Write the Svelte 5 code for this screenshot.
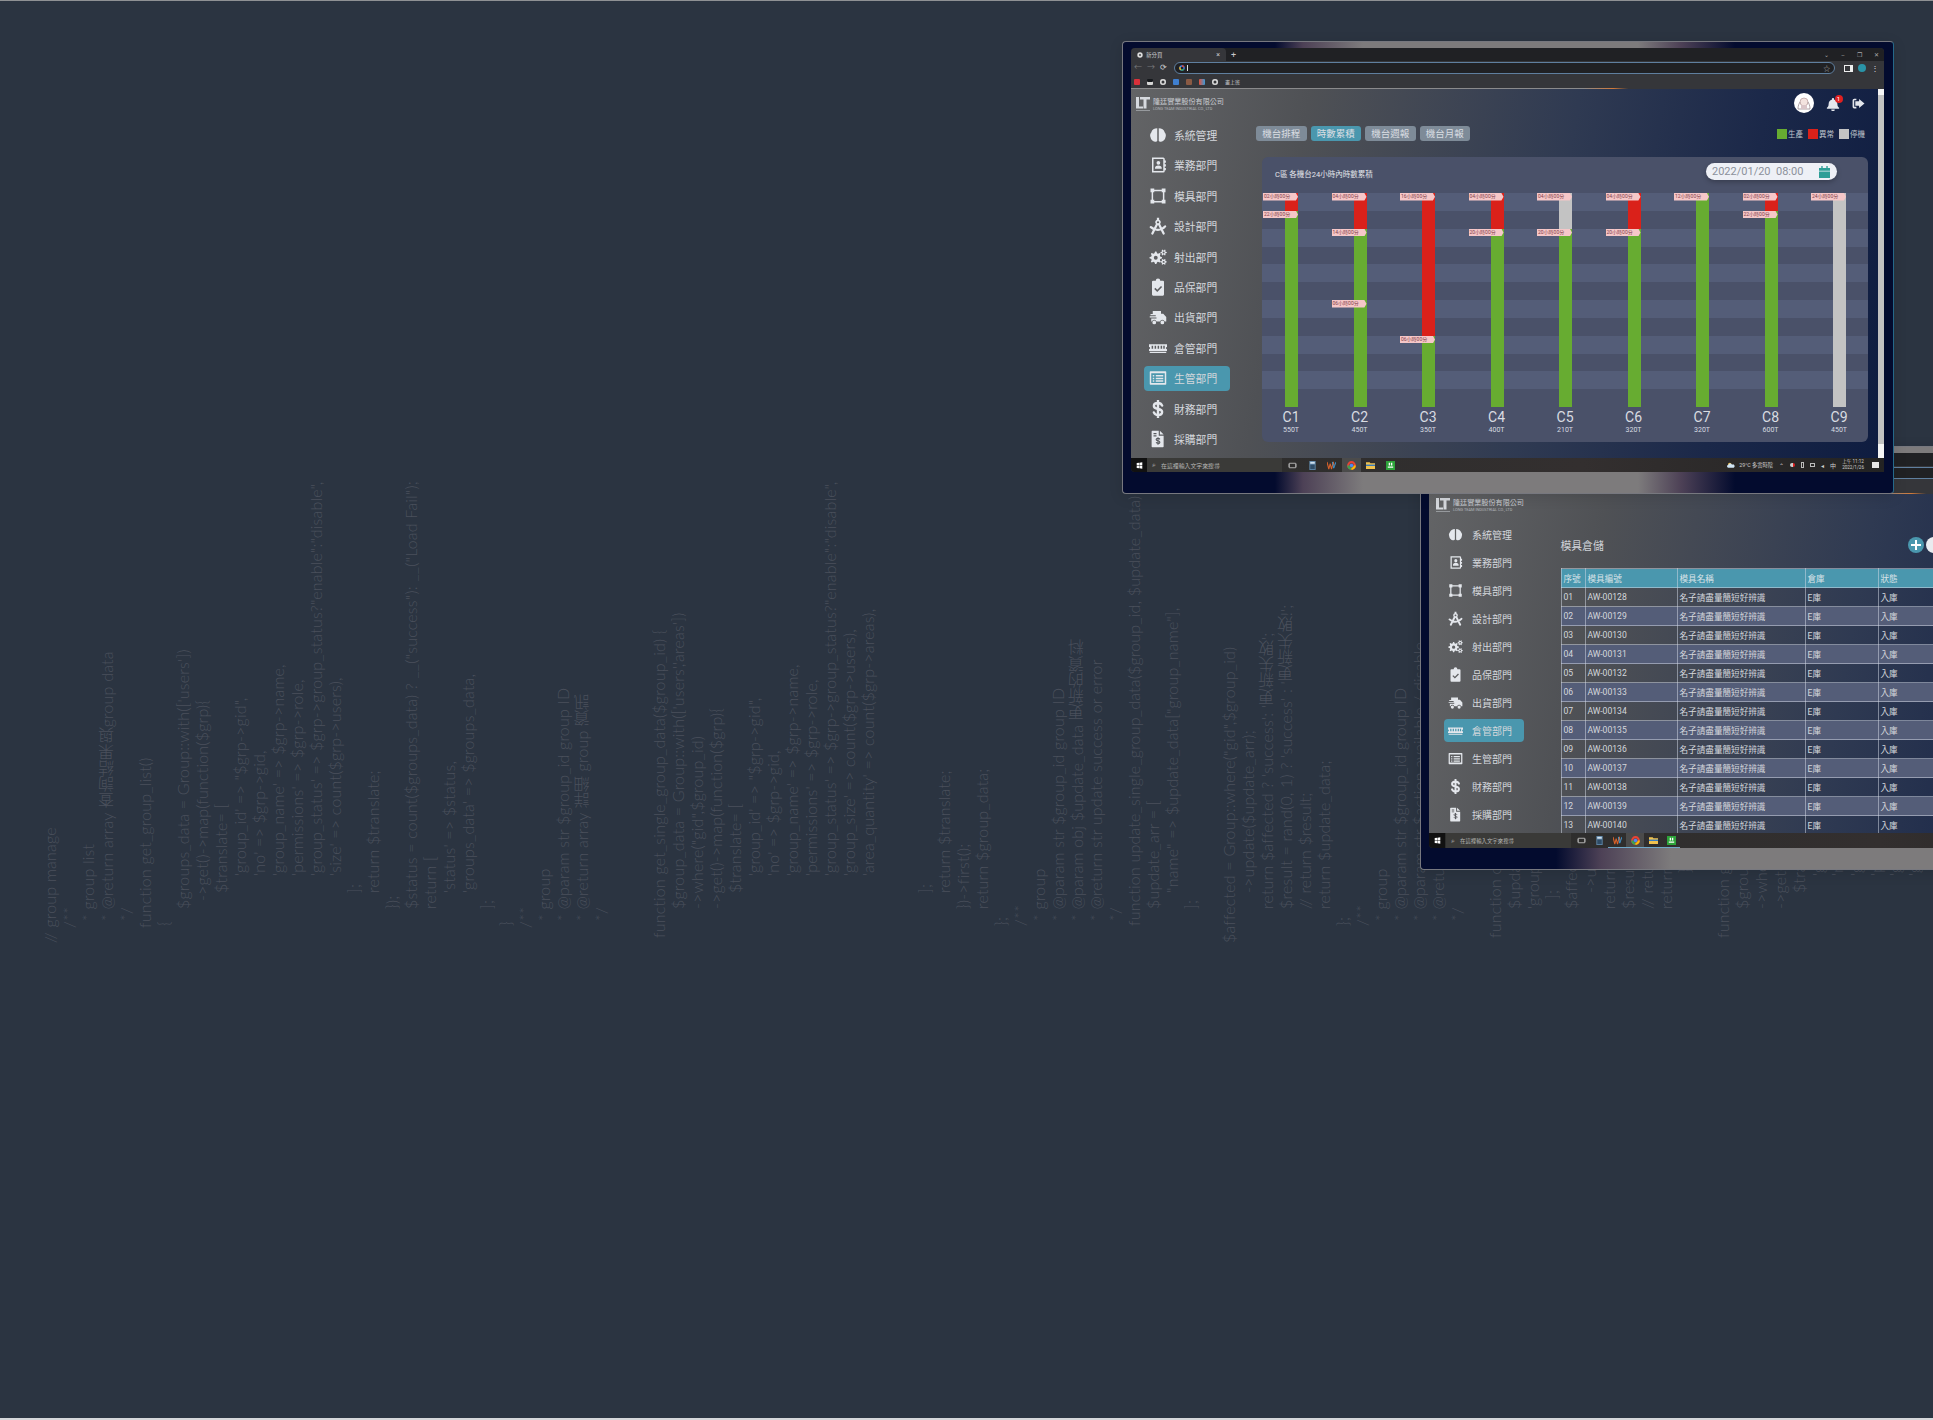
<script>
  // gear outline with a hole, used by the injection dept icon
  function gear(cx, cy, r1, r2, hole, teeth) {
    let d = '';
    const n = teeth * 4;
    for (let i = 0; i < n; i++) {
      const r = i % 4 < 2 ? r2 : r1;
      const a = ((i - 0.5) / n) * Math.PI * 2;
      d += (i ? 'L' : 'M') + (cx + r * Math.cos(a)).toFixed(2) + ' ' + (cy + r * Math.sin(a)).toFixed(2);
    }
    d += `zM${cx + hole} ${cy}a${hole} ${hole} 0 1 0 ${-2 * hole} 0a${hole} ${hole} 0 1 0 ${2 * hole} 0z`;
    return d;
  }

  const icons = {
    brain: { f: 'M11 3C7 3 4 5 3 8.500 1.500 10.500 1 12 2 15c.5 3 3 6 6 6 1.500 0 3-.5 3-1.500zM13 3c4 0 7 2 8 5.500 1.500 2 2 3.500 1 6.500-.5 3-3 6-6 6-1.500 0-3-.5-3-1.500z' },
    contact: { f: 'M4 2h15a2 2 0 0 1 2 2v16a2 2 0 0 1-2 2H4zM6 4v16h13V4zM21 6h1.500v3H21zM21 11h1.500v3H21zM21 16h1.500v3H21zM12.500 6.500a2.500 2.500 0 1 1 0 5 2.500 2.500 0 0 1 0-5zM8 16c0-2 1.500-3.500 4.500-3.500S17 14 17 16v1H8z' },
    vector: { f: 'M2 2h5v5H2zM17 2h5v5h-5zM2 17h5v5H2zM17 17h5v5h-5zM7 3.500h10v2H7zM7 18.500h10v2H7zM3.500 7h2v10h-2zM18.500 7h2v10h-2z' },
    compass: { f: 'M10.500 1h3v2.500a3.700 3.700 0 1 1-3 0zM12 5.500a1.500 1.500 0 1 0 0 3 1.500 1.500 0 0 0 0-3z', s: 'M10.500 10L4.500 22M13.500 10l6 12M2.500 13.500c5 5 14 5 19-1', w: 3 },
    cogs: { f: gear(9, 13, 6.2, 8.4, 2.600, 8) + gear(19.500, 6, 2.800, 4.200, 1.300, 6) + gear(19.500, 18.500, 2.800, 4.200, 1.300, 6) },
    clipboard: { f: 'M5.500 3.500H9a3 3 0 0 1 6 0h3.500A1.500 1.500 0 0 1 20 5v17a1.500 1.500 0 0 1-1.500 1.500h-13A1.500 1.500 0 0 1 4 22V5a1.500 1.500 0 0 1 1.500-1.500zM7 14.500L8.500 13l2.500 2.500 5-5 1.500 1.500-6.500 6.500z' },
    truck: { f: 'M5 4h11v3.500h3l4 4.500v6h-2.200a3.200 3.200 0 0 0-6.100 0H10a3.200 3.200 0 0 0-6.100 0H3v-4h7v-1.500H1V11h8V9.500H2V8h3zM7 16.800a2.500 2.500 0 1 1 0 5 2.500 2.500 0 0 1 0-5zM17.800 16.800a2.500 2.500 0 1 1 0 5 2.500 2.500 0 0 1 0-5z' },
    memory: { f: 'M0 7h24v3.500a1.500 1.500 0 0 0 0 3V16H0v-2.500a1.500 1.500 0 0 0 0-3zM3.500 9v4h2V9zM7.500 9v4h2V9zM11.500 9v4h2V9zM15.500 9v4h2V9zM19 9v4h2V9zM1 17h22v1.600H1z' },
    list: { f: 'M2 3h20a1 1 0 0 1 1 1v16a1 1 0 0 1-1 1H2a1 1 0 0 1-1-1V4a1 1 0 0 1 1-1zM3 5.500v13h18v-13zM5 8h2v2H5zM9 8h10v2H9zM5 11.500h2v2H5zM9 11.500h10v2H9zM5 15h2v2H5zM9 15h10v2H9z' },
    dollar: { s: 'M17.500 7.500C16.500 5 14.500 4 12 4 8.500 4 6.500 5.700 6.500 8s2 3.400 5.500 4 5.500 1.700 5.500 4-2 4-5.500 4c-2.500 0-4.500-1-5.500-3.500M12 1v22', w: 3.200 },
    invoice: { f: 'M4.500 1H13v6.500h6.500V22a1 1 0 0 1-1 1h-14a1 1 0 0 1-1-1V2a1 1 0 0 1 1-1zM14.500 1l5 5h-5zM6 4v1.500h4V4zM6 7v1.500h4V7z', d: 'M14.500 12.500c-.5-1-1.500-1.500-2.500-1.500-1.500 0-2.500.7-2.500 1.700s1 1.400 2.500 1.700 2.500.8 2.500 1.800-1 1.700-2.500 1.700c-1 0-2-.5-2.500-1.500M12 9.500v10' }
  };

  const depts = [
    ['brain', '系統管理'], ['contact', '業務部門'], ['vector', '模具部門'], ['compass', '設計部門'],
    ['cogs', '射出部門'], ['clipboard', '品保部門'], ['truck', '出貨部門'], ['memory', '倉管部門'],
    ['list', '生管部門'], ['dollar', '財務部門'], ['invoice', '採購部門']
  ];

  const hour = 214 / 24;
  const machines = [
    { name: 'C1', ton: '550T', segs: [['red', 2], ['green', 22]], tags: [[0, '02'], [2, '22']] },
    { name: 'C2', ton: '450T', segs: [['red', 4], ['green', 20]], tags: [[0, '04'], [4, '14'], [12, '06']] },
    { name: 'C3', ton: '350T', segs: [['red', 16], ['green', 8]], tags: [[0, '16'], [16, '06']] },
    { name: 'C4', ton: '400T', segs: [['red', 4], ['green', 20]], tags: [[0, '04'], [4, '20']] },
    { name: 'C5', ton: '210T', segs: [['grey', 4], ['green', 20]], tags: [[0, '04'], [4, '20']] },
    { name: 'C6', ton: '320T', segs: [['red', 4], ['green', 20]], tags: [[0, '04'], [4, '20']] },
    { name: 'C7', ton: '320T', segs: [['green', 24]], tags: [[0, '12']] },
    { name: 'C8', ton: '600T', segs: [['red', 2], ['green', 22]], tags: [[0, '02'], [2, '22']] },
    { name: 'C9', ton: '450T', segs: [['grey', 24]], tags: [[0, '24']] }
  ];

  const rows = Array.from({ length: 13 }, (_, i) => ({
    no: String(i + 1).padStart(2, '0'),
    code: 'AW-00' + (128 + i)
  }));

  const code = [
    [0, '// group manage'], [15, '/**'], [22, '* group list'], [22, '* @return array 查詢結果與group data'], [22, '*/'],
    [15, 'function get_group_list()'], [17, '{'], [34, "$groups_data = Group::with(['users'])"],
    [42, '->get()->map(function($grp){'], [50, '$translate= ['], [67, `'group_id' => "$grp->gid",`], [67, "'no' => $grp->gid,"],
    [67, "'group_name' => $grp->name,"], [67, "'permissions' => $grp->role,"],
    [67, `'group_status' => $grp->group_status?"enable":"disable",`], [67, "'size' => count($grp->users),"],
    [50, '];'], [50, 'return $translate;'], [34, '});'], [34, '$status = count($groups_data) ? __("success"): __("Load Fail");'],
    [34, 'return ['], [50, "'status' => $status,"], [50, "'groups_data' => $groups_data,"], [34, '];'], [17, '}'],
    [15, '/**'], [22, '* group'], [22, '* @param str $group_id group ID'], [22, '* @return array 詳細 group 資訊'], [22, '*/'], [0, ''], [0, ''],
    [5, 'function get_single_group_data($group_id) {'], [34, `$group_data = Group::with(['users','areas'])`],
    [34, '->where("gid",$group_id)'], [34, '->get()->map(function($grp){'], [50, '$translate= ['], [67, `'group_id' => "$grp->gid",`],
    [67, "'no' => $grp->gid,"], [67, "'group_name' => $grp->name,"], [67, "'permissions' => $grp->role,"],
    [67, `'group_status' => $grp->group_status?"enable":"disable",`], [67, "'group_size' => count($grp->users),"],
    [67, "'area_quantity' => count($grp->areas),"], [0, ''], [0, ''],
    [50, '];'], [50, 'return $translate;'], [34, '})->first();'], [34, 'return $group_data;'], [17, '};'],
    [17, '/**'], [22, '* group'], [22, '* @param str $group_id group ID'], [22, '* @param obj $update_data 更新的資料'],
    [22, '* @return str update success or error'], [22, '*/'],
    [17, 'function update_single_group_data($group_id, $update_data) {'], [34, '$update_arr = ['],
    [50, '"name" => $update_data["group_name"],'], [34, '];'], [0, ''], [0, '$affected = Group::where("gid",$group_id)'],
    [50, '->update($update_arr);'], [34, "return $affected ? 'success': '更新失敗';"], [34, "$result = rand(0, 1) ? 'success' : '更新失敗!';"],
    [34, '// return $result;'], [34, 'return $update_data;'], [17, '};'], [17, '/**'], [22, '* group'],
    [22, '* @param str $group_id group ID'], [22, '* @param str $action available / disable'], [22, '* @return str success'], [22, '*/'], [0, ''],
    [5, 'function change_group_status($group_id, $action) {'], [34, '$update_arr = ['], [34, "'group_status' => $action,"], [44, '];'],
    [34, '$affected = Group::where("gid",$group_id)'], [50, '->update($update_arr);'], [34, "return $affected ? 'success': 'error';"],
    [34, "$result = rand(0, 1);"], [34, '// return $result;'], [34, 'return $update_data;'], [70, '};'], [0, ''],
    [5, 'function get_group_status($group_id) {'], [34, '$group = Group::with(["users"])'], [34, '->where("gid",$group_id)'],
    [34, '->get()->map(function($grp){'], [50, '$translate= ['], [67, `'group_id' => "$grp->gid",`], [67, "'no' => $grp->gid,"],
    [67, "'group_name' => $grp->name,"], [67, "'permissions' => $grp->role,"], [67, "'group_status' => $grp->group_status,"],
    [67, "'group_size' => count($grp->users),"]
  ];
</script>

{#snippet icon(name)}
  <svg class="dept-icon" viewBox="0 0 24 24">
    {#if icons[name].f}<path d={icons[name].f} fill="currentColor" fill-rule="evenodd" />{/if}
    {#if icons[name].s}<path d={icons[name].s} fill="none" stroke="currentColor" stroke-width={icons[name].w || 2.400} stroke-linecap="round" />{/if}
    {#if icons[name].d}<path d={icons[name].d} fill="none" stroke="#55585c" stroke-width="1.500" />{/if}
  </svg>
{/snippet}

{#snippet logo()}
  <div class="brand">
    <svg class="brand-mark" viewBox="0 0 28 32">
      <path d="M0 2h6v19h8v4H0z" fill="#d6d9de" />
      <path d="M8 2h20v5h-7v18h-6V7H8z" fill="#d6d9de" />
      <rect x="0" y="28" width="28" height="1.500" fill="#a9acb1" />
    </svg>
    <div class="brand-text">
      <span class="brand-zh">隆廷實業股份有限公司</span>
      <span class="brand-en">LONG TEAM INDUSTRIAL CO., LTD</span>
    </div>
  </div>
{/snippet}

{#snippet sidebar(active)}
  <nav class="sidebar">
    {#each depts as [name, label]}
      <div class="dept" class:active={label === active}>
        {@render icon(name)}
        <span>{label}</span>
      </div>
    {/each}
  </nav>
{/snippet}

{#snippet browser()}
  <div class="browser">
    <div class="tabstrip">
      <div class="tab">
        <svg class="mini" viewBox="0 0 10 10"><circle cx="5" cy="5" r="4.500" fill="#dcdcdc" /><circle cx="5" cy="5" r="1.500" fill="#35363a" /></svg>
        <span>新分頁</span>
        <i class="tab-x">×</i>
      </div>
      <span class="tab-plus">+</span>
      <div class="win-btns"><span>⌄</span><span>–</span><span>❐</span><span>✕</span></div>
    </div>
    <div class="toolbar">
      <span class="nav-btn dim">←</span><span class="nav-btn dim">→</span><span class="nav-btn">⟳</span>
      <div class="omnibox">
        <svg class="mini" viewBox="0 0 10 10">
          <circle cx="5" cy="5" r="3.500" fill="none" stroke="#4c8bf5" stroke-width="2" />
          <path d="M5 1.500A3.500 3.500 0 0 1 8 3.300" fill="none" stroke="#e94235" stroke-width="2" />
          <path d="M2 3.300A3.500 3.500 0 0 0 3.300 8" fill="none" stroke="#fabb05" stroke-width="2" />
          <path d="M3.300 8A3.500 3.500 0 0 0 7.800 7" fill="none" stroke="#34a853" stroke-width="2" />
        </svg>
        <i class="caret"></i>
        <span class="omni-right">☆</span>
      </div>
      <i class="side-btn"></i>
      <i class="profile"></i>
      <span class="kebab">⋮</span>
    </div>
    <div class="bookmarks">
      <i class="bm" style="background:#d9303a"></i>
      <i class="bm" style="background:#15181c;box-shadow:inset 0 -3px 0 #d5d5d5"></i>
      <i class="bm round"></i>
      <i class="bm" style="background:#3f7fd0"></i>
      <i class="bm" style="background:#8a5a44"></i>
      <i class="bm" style="background:linear-gradient(90deg,#e2523b,#3a9ad9)"></i>
      <i class="bm round"></i>
      <span>畫上班</span>
    </div>
  </div>
{/snippet}

{#snippet taskbar(showTray)}
  <div class="taskbar">
    <div class="start">
      <svg viewBox="0 0 10 10"><path d="M1 1.500l3.500-.5v3.600H1zM5 1l4-.5v4.100H5zM1 5.200h3.500V9L1 8.500zM5 5.200h4v4.300L5 9z" fill="#fff" /></svg>
    </div>
    <div class="search"><span class="lens">⌕</span><span>在這裡輸入文字來搜尋</span></div>
    <div class="tb-icon"><svg viewBox="0 0 10 10"><path d="M1.500 2.500h7v5h-7zM0 3v4M10 3v4" fill="none" stroke="#bbb" /></svg></div>
    <div class="tb-icon"><svg viewBox="0 0 10 10"><rect x="1.500" y="0" width="7" height="10" fill="#5f86a8" /><rect x="2.500" y="1" width="5" height="2" fill="#cfe0ee" /><rect x="2.500" y="4" width="5" height="5" fill="#2f4c66" /></svg></div>
    <div class="tb-icon lined"><svg viewBox="0 0 10 10"><path d="M0 1l2 8 1.500-6 1.500 6 2-8 1 4" fill="none" stroke="#d9622b" stroke-width="1.200" /><path d="M6 1l1.500 7L10 1" fill="none" stroke="#3a9ad9" /></svg></div>
    <div class="tb-icon on lined"><svg viewBox="0 0 10 10"><circle cx="5" cy="5" r="3.700" fill="none" stroke="#e94235" stroke-width="2.400" /><path d="M1.500 5A3.600 3.600 0 0 0 5 8.700" fill="none" stroke="#34a853" stroke-width="2.400" /><path d="M8.600 5A3.600 3.600 0 0 1 5 8.700" fill="none" stroke="#fabb05" stroke-width="2.400" /><circle cx="5" cy="5" r="2" fill="#4c8bf5" /></svg></div>
    <div class="tb-icon lined"><svg viewBox="0 0 10 10"><path d="M0 1.500h4l1 1h5V9H0z" fill="#f0c24f" /><rect x="0" y="4" width="10" height="1.500" fill="#2f78c4" /></svg></div>
    <div class="tb-icon lined"><svg viewBox="0 0 10 10"><rect width="10" height="10" fill="#2da43a" /><path d="M3 2h1.500v3H3zM5.500 2H7v3H5.500zM2 6h6v1.500H2z" fill="#fff" /></svg></div>
    {#if showTray}
      <div class="tray">
        <svg class="cloud" viewBox="0 0 12 8"><circle cx="4" cy="3" r="2.500" fill="#f2c14e" /><path d="M2 8a2 2 0 0 1 0-4 3 3 0 0 1 5.500-.5A2.300 2.300 0 0 1 10 8z" fill="#cfe4f5" /></svg>
        <span class="weather">29°C 多雲時陰</span>
        <span class="tray-sym">⌃</span>
        <i class="tray-dot"></i>
        <i class="tray-box"></i>
        <i class="tray-box small"></i>
        <span class="tray-sym">◂</span>
        <span class="tray-sym ime">中</span>
        <div class="clock"><span>上午 11:12</span><span>2022/1/26</span></div>
        <i class="notify"></i>
      </div>
    {/if}
  </div>
{/snippet}

<div class="desktop">
  <div class="code">
    {#each code as [indent, text]}
      <div class="code-line" style="padding-inline-start:{indent}px">{text}</div>
    {/each}
  </div>

  <!-- 倉管部門 window, sits behind the chart window and runs off the right edge -->
  <section class="window win-stock">
    <div class="screen">
      {@render browser()}
      <div class="app">
        <div class="app-page">
          <header class="app-head">{@render logo()}</header>
          <div class="app-body">
            {@render sidebar('倉管部門')}
            <main class="stock">
              <div class="stock-title">
                <h2>模具倉儲</h2>
                <span class="round-btn plus"><i></i></span>
                <span class="round-btn"></span>
              </div>
              <table>
                <colgroup><col style="width:24px" /><col style="width:92px" /><col style="width:128px" /><col style="width:73px" /><col style="width:120px" /></colgroup>
                <thead>
                  <tr><th>序號</th><th>模具編號</th><th>模具名稱</th><th>倉庫</th><th>狀態</th></tr>
                </thead>
                <tbody>
                  {#each rows as row}
                    <tr>
                      <td>{row.no}</td><td>{row.code}</td><td>名子請盡量簡短好辨識</td><td>E庫</td><td>入庫</td>
                    </tr>
                  {/each}
                </tbody>
              </table>
            </main>
          </div>
        </div>
      </div>
      {@render taskbar(false)}
    </div>
  </section>

  <!-- 生管部門 window -->
  <section class="window win-chart">
    <div class="screen">
      {@render browser()}
      <div class="app">
        <div class="app-page">
          <header class="app-head">
            {@render logo()}
            <div class="user">
              <div class="avatar">
                <svg viewBox="0 0 20 20">
                  <circle cx="10" cy="9" r="4" fill="#f3e3df" stroke="#a98b8b" stroke-width=".6" />
                  <path d="M6 9c-2 3-2 6-2 7h12c0-1 0-4-2-7" fill="none" stroke="#9a8a8f" stroke-width=".8" />
                  <path d="M7 16V12h6v4z" fill="#d9c5c8" />
                </svg>
              </div>
              <div class="bell">
                <svg viewBox="0 0 24 24"><path d="M12 1.500a2 2 0 0 1 2 2V4.500c3.500 1 5.500 3.600 5.500 7.500 0 4 1.500 5 3 6.500v1.500h-21v-1.500c1.500-1.500 3-2.500 3-6.500 0-3.900 2-6.500 5.500-7.500V3.500a2 2 0 0 1 2-2zM9 21.500h6a3 3 0 0 1-6 0z" fill="#e3e6ec" /></svg>
                <b>1</b>
              </div>
              <svg class="logout" viewBox="0 0 24 24"><path d="M9 3H5a3 3 0 0 0-3 3v12a3 3 0 0 0 3 3h4v-3H5V6h4z" fill="#e3e6ec" /><path d="M14 3.500L24 12 14 20.500V16H7V8h7z" fill="#e3e6ec" /></svg>
            </div>
          </header>
          <div class="app-body">
            {@render sidebar('生管部門')}
            <main class="board">
              <div class="board-bar">
                <div class="tabs">
                  <span class="pill">機台排程</span>
                  <span class="pill current">時數累積</span>
                  <span class="pill">機台週報</span>
                  <span class="pill">機台月報</span>
                </div>
                <div class="legend">
                  <i class="green"></i><span>生產</span>
                  <i class="red"></i><span>異常</span>
                  <i class="grey"></i><span>停機</span>
                </div>
              </div>
              <div class="panel">
                <div class="panel-head">
                  <span class="panel-title">C區 各機台24小時內時數累積</span>
                  <div class="date">
                    <span>2022/01/20&nbsp;&nbsp;08:00</span>
                    <svg viewBox="0 0 12 13"><path d="M2.500 0h1.500v2h4V0h1.500v2H12v3H0V2h2.500zM0 6h12v7H0z" fill="#2e9e97" /></svg>
                  </div>
                </div>
                <div class="chart">
                  {#each machines as m}
                    <div class="bar">
                      {#each m.segs as [color, h]}
                        <div class="seg {color}" style="height:{h * hour}px"></div>
                      {/each}
                      {#each m.tags as [at, h]}
                        <span class="tag" style="top:{at * hour}px">{h}小時00分</span>
                      {/each}
                    </div>
                  {/each}
                </div>
                <div class="labels">
                  {#each machines as m}
                    <div class="label"><b>{m.name}</b><span>{m.ton}</span></div>
                  {/each}
                </div>
              </div>
            </main>
          </div>
        </div>
        <div class="scrollbar"><i></i></div>
      </div>
      {@render taskbar(true)}
    </div>
  </section>
</div>

<style>
  :global(body) {
    margin: 0;
    background: #2b3441;
  }

  .desktop {
    position: relative;
    width: 1933px;
    height: 1420px;
    overflow: hidden;
    background: #2b3441;
    border-top: 1px solid #8f9194;
    border-bottom: 2px solid #d5d7da;
    box-sizing: border-box;
    font-family: Roboto, "Noto Sans CJK TC", sans-serif;
  }

  /* wallpaper code, reads bottom to top */
  .code {
    position: absolute;
    left: 40px;
    bottom: 475px;
    height: 480px;
    writing-mode: vertical-rl;
    transform: rotate(180deg);
    white-space: pre;
    font-family: Lato, "Noto Sans CJK TC", sans-serif;
    font-weight: 300;
    font-size: 16px;
    letter-spacing: 0.2px;
    color: #4a505c;
  }

  .code-line {
    width: 19.03px;
    line-height: 19.03px;
  }

  .window {
    position: absolute;
    width: 772px;
    height: 453px;
    box-sizing: border-box;
    padding: 6px 9px 21px 8px;
    border: 1px solid #77787f;
    border-right-color: #24688a;
    border-radius: 4px;
    background: linear-gradient(90deg, #030b2e 0, #030b2e 152px, #4d4156 180px, #7d7b7c 240px, #7d7b7c 515px, #4d4156 558px, #030b2e 612px, #030b2e 100%);
    box-shadow: 0 3px 14px rgba(0, 0, 0, 0.12);
  }

  .win-chart {
    left: 1122px;
    top: 40px;
  }

  .win-stock {
    left: 1420px;
    top: 445px;
    height: 424px;
    background: linear-gradient(90deg, #030b2e 0, #030b2e 135px, #4d4156 180px, #7d7b7c 250px, #7d7b7c 100%);
  }

  .screen {
    display: flex;
    flex-direction: column;
    height: 100%;
    border-radius: 4px 4px 0 4px;
    overflow: hidden;
  }

  /* browser chrome */
  .browser {
    height: 41px;
    flex: none;
    display: flex;
    flex-direction: column;
    background: #35363a;
    color: #c8c9cc;
  }

  .tabstrip {
    height: 13px;
    display: flex;
    align-items: center;
    background: #202124;
    font-size: 5.500px;
  }

  .tab {
    width: 95px;
    height: 100%;
    display: flex;
    align-items: center;
    gap: 3px;
    padding: 0 6px;
    box-sizing: border-box;
    background: #35363a;
    border-radius: 4px 4px 0 0;
  }

  .tab-x {
    margin-left: auto;
    font-style: normal;
    font-size: 7px;
  }

  .tab-plus {
    margin-left: 5px;
    font-size: 9px;
  }

  .win-btns {
    margin-left: auto;
    display: flex;
    gap: 12px;
    padding-right: 5px;
    font-size: 6px;
    color: #aaa;
  }

  .mini {
    width: 6px;
    height: 6px;
    flex: none;
  }

  .toolbar {
    height: 14px;
    display: flex;
    align-items: center;
    padding: 0 5px 0 3px;
    gap: 5px;
    font-size: 8px;
  }

  .nav-btn {
    width: 8px;
    text-align: center;
    color: #d0d1d3;
    line-height: 1;
  }

  .nav-btn.dim {
    color: #77787b;
  }

  .omnibox {
    width: 671px;
    margin-left: 1px;
    height: 12px;
    box-sizing: border-box;
    display: flex;
    align-items: center;
    gap: 2px;
    padding: 0 4px;
    background: #202124;
    border: 1px solid #5f7f9f;
    border-radius: 6px;
    color: #aaa;
  }

  .caret {
    width: 1px;
    height: 6px;
    background: #ddd;
  }

  .omni-right {
    margin-left: auto;
    font-size: 7px;
  }

  .side-btn {
    width: 5px;
    height: 5px;
    margin-left: 4px;
    border: 1px solid #eee;
    border-right-width: 3px;
  }

  .profile {
    width: 8px;
    height: 8px;
    border-radius: 50%;
    background: #2a94a8;
  }

  .kebab {
    color: #ddd;
  }

  .bookmarks {
    flex: 1;
    display: flex;
    align-items: center;
    gap: 7px;
    padding-left: 3px;
    font-size: 5px;
    border-bottom: 1px solid;
    border-image: linear-gradient(90deg, #8a8a8c 0, #8a8a8c 60%, #d07a3a 64%, #35363a 66%) 1;
  }

  .bm {
    width: 6px;
    height: 6px;
    border-radius: 1px;
  }

  .bm.round {
    border-radius: 50%;
    background: #dcdcdc;
    box-shadow: inset 0 0 0 1.500px #dcdcdc, inset 0 0 0 3px #35363a;
  }

  /* the web app inside */
  .app {
    flex: 1;
    min-height: 0;
    display: flex;
    color: #d4d7dc;
    background: linear-gradient(100deg, #636466 0, #4f5155 22%, #2f3a52 55%, #1b2849 78%, #0e1c40 100%);
  }

  .app-page {
    flex: 1;
    min-width: 0;
    overflow: hidden;
  }

  .app-head {
    display: flex;
    justify-content: space-between;
    box-sizing: border-box;
  }

  .brand {
    display: flex;
    align-items: flex-start;
    gap: 3px;
  }

  .brand-mark {
    width: 14px;
    height: 16px;
  }

  .brand-text {
    display: flex;
    flex-direction: column;
    color: #c9ccd1;
    white-space: nowrap;
  }

  .brand-zh {
    font-size: 7.100px;
    line-height: 9px;
    margin-top: 1px;
  }

  .brand-en {
    font-size: 3.900px;
    line-height: 6px;
    color: #b3b6bb;
  }

  .app-body {
    display: flex;
  }

  .sidebar {
    flex: none;
    display: flex;
    flex-direction: column;
    box-sizing: border-box;
  }

  .dept {
    display: flex;
    align-items: center;
    box-sizing: border-box;
    border-radius: 4px;
    white-space: nowrap;
  }

  .dept.active {
    background: #4a97ae;
  }

  .dept-icon {
    flex: none;
    color: #e4e7ec;
  }

  .win-chart .app-head {
    height: 33.500px;
    padding: 7px 13px 0 5px;
  }

  .win-chart .sidebar {
    width: 125px;
    padding-left: 13px;
    gap: 5.400px;
  }

  .win-chart .dept {
    width: 86px;
    height: 25px;
    padding-left: 5px;
    gap: 7px;
    font-size: 10.800px;
  }

  .win-chart .dept-icon {
    width: 18px;
    height: 18px;
  }

  .win-stock .app-head {
    height: 28.500px;
    padding: 3px 0 0 7px;
  }

  .win-stock .sidebar {
    width: 131.500px;
    padding-left: 15px;
    gap: 5.100px;
  }

  .win-stock .dept {
    width: 80px;
    height: 23px;
    padding-left: 3.500px;
    gap: 9.500px;
    font-size: 10px;
  }

  .win-stock .dept-icon {
    width: 15px;
    height: 15px;
  }

  .user {
    display: flex;
    align-items: center;
    height: 20px;
    gap: 11.500px;
    margin-top: -3px;
  }

  .avatar {
    width: 20px;
    height: 20px;
    border-radius: 50%;
    background: #fff;
  }

  .bell {
    position: relative;
    width: 14px;
    height: 15px;
  }

  .bell b {
    position: absolute;
    right: -3px;
    top: -1px;
    width: 8px;
    height: 8px;
    border-radius: 50%;
    background: #e02020;
    color: #fff;
    font-size: 6px;
    font-weight: 400;
    line-height: 8px;
    text-align: center;
  }

  .logout {
    width: 14px;
    height: 13px;
  }

  .scrollbar {
    width: 6px;
    flex: none;
    box-sizing: border-box;
    padding: 6px 0 14px;
    background: #f4f4f4;
  }

  .scrollbar i {
    display: block;
    height: 100%;
    background: #c1c1c1;
  }

  /* chart window */
  .board {
    width: 612px;
    flex: none;
    padding-top: 3.500px;
  }

  .board-bar {
    display: flex;
    justify-content: space-between;
    height: 15px;
    margin-bottom: 16px;
    padding-right: 3px;
  }

  .tabs {
    display: flex;
    gap: 4px;
  }

  .pill {
    width: 50.500px;
    height: 15px;
    border-radius: 3px;
    background: #7e8b98;
    color: #d9dde2;
    font-size: 9.500px;
    line-height: 15px;
    text-align: center;
  }

  .pill.current {
    background: #4a97ae;
  }

  .legend {
    display: flex;
    align-items: center;
    font-size: 7.500px;
    color: #bfc4cc;
  }

  .legend i {
    width: 10px;
    height: 10px;
    margin-right: 1px;
  }

  .legend span {
    margin-right: 5px;
  }

  .legend span:last-child {
    margin-right: 0;
  }

  .green {
    background: #67ac31;
  }

  .red {
    background: #da211a;
  }

  .grey {
    background: #c3c3c3;
  }

  .panel {
    margin-left: 6px;
    height: 285px;
    border-radius: 6px;
    background: #4a5169;
    overflow: hidden;
  }

  .panel-head {
    height: 36px;
    display: flex;
    justify-content: space-between;
    align-items: flex-start;
    box-sizing: border-box;
    padding: 6px 31px 0 13px;
  }

  .panel-title {
    font-size: 7.500px;
    line-height: 11px;
    margin-top: 6px;
    color: #e3e5ea;
  }

  .date {
    width: 131px;
    height: 17px;
    display: flex;
    align-items: center;
    justify-content: space-between;
    box-sizing: border-box;
    padding: 0 7px 0 6px;
    border-radius: 9px;
    background: #eef0f6;
    box-shadow: 0 2px 5px rgba(0, 0, 0, 0.25);
    color: #8c919b;
    font-size: 11px;
  }

  .date svg {
    width: 11px;
    height: 12px;
  }

  .chart {
    height: 214px;
    display: flex;
    gap: 55.500px;
    padding-left: 23px;
    background: repeating-linear-gradient(180deg, #545d78 0, #545d78 17.830px, #4a5169 17.830px, #4a5169 35.670px);
  }

  .bar {
    position: relative;
    width: 13px;
    flex: none;
  }

  .tag {
    position: absolute;
    right: 0;
    width: 35px;
    height: 7.500px;
    box-sizing: border-box;
    padding-left: 1px;
    background: #f6c7c8;
    clip-path: polygon(0 0, 94% 0, 100% 50%, 94% 100%, 0 100%);
    color: #80404a;
    font-size: 5px;
    line-height: 7.500px;
    white-space: nowrap;
  }

  .labels {
    display: flex;
    gap: 55.500px;
    padding: 2px 0 0 22.500px;
  }

  .label {
    width: 13px;
    flex: none;
    display: flex;
    flex-direction: column;
    align-items: center;
    white-space: nowrap;
    color: #d9dce2;
  }

  .label b {
    font-weight: 400;
    font-size: 14px;
    line-height: 17px;
  }

  .label span {
    font-size: 7px;
    line-height: 8px;
  }

  /* stock window */
  .stock {
    width: 620px;
    flex: none;
    color: #d4d7dc;
  }

  .stock-title {
    width: 381px;
    height: 16px;
    display: flex;
    align-items: center;
    gap: 2px;
    margin: 14.500px 0 15px;
  }

  .stock-title h2 {
    margin: 0 auto 0 0;
    font-size: 10.800px;
    font-weight: 400;
    color: #cfd2d7;
  }

  .round-btn {
    position: relative;
    width: 16px;
    height: 16px;
    border-radius: 50%;
    background: #e9ebef;
  }

  .round-btn.plus {
    background: #4a97ae;
  }

  .round-btn.plus i {
    position: absolute;
    left: 3px;
    top: 7px;
    width: 10px;
    height: 2px;
    background: #fff;
  }

  .round-btn.plus i::after {
    content: "";
    position: absolute;
    left: 4px;
    top: -4px;
    width: 2px;
    height: 10px;
    background: #fff;
  }

  table {
    width: 437px;
    table-layout: fixed;
    border-collapse: collapse;
    font-size: 8.600px;
  }

  th,
  td {
    height: 19px;
    padding: 0 0 0 2px;
    box-sizing: border-box;
    font-weight: 400;
    text-align: left;
    white-space: nowrap;
    border: 1px solid rgba(214, 220, 232, 0.5);
  }

  th {
    background: #4a97ae;
    color: #d9e3e8;
  }

  tbody tr:nth-child(even) {
    background: #545d78;
  }

  .taskbar {
    height: 14px;
    flex: none;
    display: flex;
    align-items: center;
    background: linear-gradient(90deg, #2c2d2c, #332f2f 60%, #232323);
  }

  .win-stock .taskbar {
    height: 15px;
  }

  .start {
    width: 16px;
    height: 100%;
    flex: none;
    display: flex;
    align-items: center;
    justify-content: center;
    background: #111;
  }

  .start svg {
    width: 7px;
    height: 7px;
  }

  .search {
    width: 135px;
    height: 100%;
    flex: none;
    display: flex;
    align-items: center;
    gap: 5px;
    box-sizing: border-box;
    padding-left: 5px;
    background: #3a3a38;
    color: #b5b5b3;
    font-size: 5.900px;
    white-space: nowrap;
  }

  .win-stock .search {
    width: 125px;
    margin-left: 1px;
    font-size: 5.400px;
  }

  .lens {
    font-size: 7px;
    color: #ccc;
  }

  .tb-icon {
    width: 19.500px;
    height: 100%;
    flex: none;
    display: flex;
    align-items: center;
    justify-content: center;
    box-sizing: border-box;
  }

  .win-stock .tb-icon {
    width: 18px;
  }

  .win-stock .tb-icon.lined {
    border-bottom: 1px solid #6fa8c9;
  }

  .tb-icon.on {
    background: #4b4b4b;
  }

  .tb-icon svg {
    width: 9px;
    height: 9px;
  }

  .tb-icon:nth-child(3) {
    margin-left: 1px;
  }

  .tray {
    margin-left: auto;
    height: 100%;
    display: flex;
    align-items: center;
    gap: 6px;
    padding-right: 5px;
    color: #cfcfcf;
    font-size: 5.300px;
    white-space: nowrap;
  }

  .cloud {
    width: 8px;
    height: 6px;
    margin-right: -2px;
  }

  .tray-sym {
    font-size: 6px;
  }

  .tray-dot {
    width: 5px;
    height: 4px;
    border-radius: 2px;
    background: linear-gradient(90deg, #ccc 50%, #e02020 50%);
  }

  .tray-box {
    width: 3px;
    height: 6px;
    border: 1px solid #bbb;
    box-sizing: border-box;
  }

  .tray-box.small {
    width: 5px;
    height: 4px;
  }

  .clock {
    display: flex;
    flex-direction: column;
    align-items: center;
    font-size: 4.600px;
    line-height: 6px;
  }

  .notify {
    width: 7px;
    height: 6px;
    background: #e6e6e6;
    margin-left: 2px;
  }
</style>
